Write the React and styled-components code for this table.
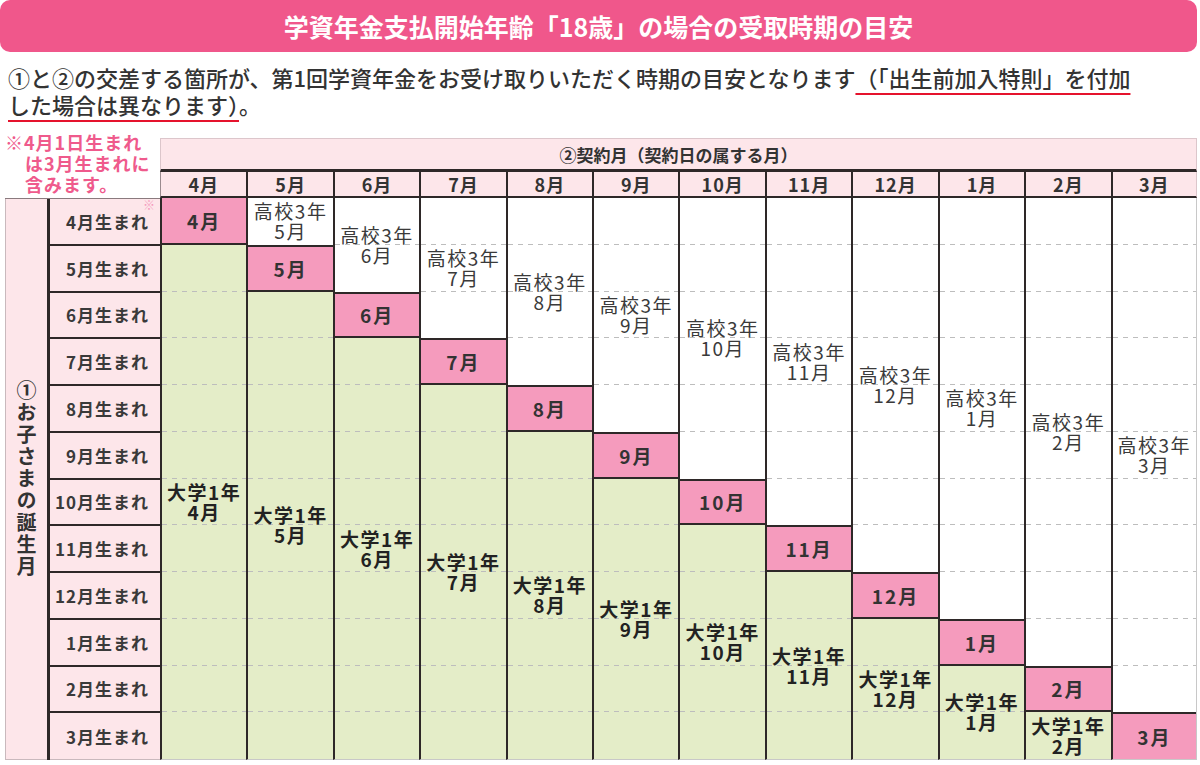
import React from 'react';
import styled, { createGlobalStyle } from 'styled-components';

const DARK = '#2e2828';
const PINK = '#f59bbd';
const GREEN = '#e4edc8';
const LIGHT = '#fde6ea';
const MONTHS = [4, 5, 6, 7, 8, 9, 10, 11, 12, 1, 2, 3];

const GlobalStyle = createGlobalStyle`
  *, *::before, *::after { box-sizing: border-box; }
  html, body { margin: 0; padding: 0; background: #fff; }
  body { font-family: "Noto Sans CJK JP", "Noto Sans", sans-serif; color: #333; }
`;

const Page = styled.div`
  width: 1200px;
  height: 765px;
  overflow: hidden;
`;

const TitleBar = styled.h1`
  margin: 0;
  width: 1197px;
  height: 52px;
  background: #f0578b;
  border-radius: 10px;
  display: flex;
  align-items: center;
  justify-content: center;
  color: #fff;
  font-size: 25px;
  font-weight: 700;
`;

const Intro = styled.p`
  margin: 12px 0 0 8px;
  font-size: 22px;
  line-height: 27px;
  font-weight: 500;
  color: #333;
`;

const Marked = styled.span`
  text-decoration: underline;
  text-decoration-color: #e5132d;
  text-decoration-thickness: 2px;
  text-underline-offset: 6px;
`;

const Table = styled.div`
  display: grid;
  grid-template-columns: 155px repeat(12, 1fr);
  grid-template-rows: 34px 26px 562px;
  width: 1192px;
  margin: 20px 0 0 5px;
`;

const Note = styled.div`
  grid-column: 1;
  grid-row: 1 / 3;
  margin-top: -6px;
  padding-left: 20px;
  text-indent: -20px;
  color: #ef5a8c;
  font-size: 18px;
  font-weight: 700;
  line-height: 21px;
  letter-spacing: 1px;
`;

const HeadTitle = styled.div`
  grid-column: 2 / 14;
  grid-row: 1;
  background: ${LIGHT};
  border: 1px solid #dcc6cb;
  border-bottom: 3px solid ${DARK};
  display: flex;
  align-items: center;
  justify-content: center;
  font-size: 17px;
  font-weight: 700;
  color: #333;
`;

const MonthHead = styled.div`
  grid-row: 2;
  background: ${LIGHT};
  border-left: ${(p) => (p.$first ? '1px solid #9a8a8e' : `2px solid ${DARK}`)};
  border-right: ${(p) => (p.$last ? '1px solid #dcc6cb' : 'none')};
  border-bottom: 2px solid ${DARK};
  display: flex;
  align-items: center;
  justify-content: center;
  font-size: 18px;
  letter-spacing: 1px;
  font-weight: 700;
  color: #333;
`;

const LabelBlock = styled.div`
  grid-column: 1;
  grid-row: 3;
  display: flex;
  border-top: 1px solid #8a7a7e;
`;

const SideLabel = styled.div`
  width: 42px;
  background: ${LIGHT};
  border-left: 1px solid #c9b9bd;
  border-bottom: 1px solid #c9b9bd;
  display: flex;
  align-items: center;
  justify-content: center;
`;

const VerticalText = styled.span`
  writing-mode: vertical-rl;
  text-orientation: upright;
  font-size: 20px;
  font-weight: 700;
  letter-spacing: 2px;
  color: #333;
`;

const RowLabels = styled.div`
  flex: 1;
  display: grid;
  grid-template-rows: repeat(12, 1fr);
  border-left: 3px solid ${DARK};
`;

const RowLabel = styled.div`
  position: relative;
  background: ${LIGHT};
  border-bottom: ${(p) => (p.$last ? '1px solid #c9b9bd' : `2px solid ${DARK}`)};
  display: flex;
  align-items: center;
  justify-content: flex-end;
  padding-right: 11px;
  font-size: 17px;
  letter-spacing: 1px;
  font-weight: 700;
  color: #3a3a3a;
`;

const Asterisk = styled.span`
  position: absolute;
  top: 0px;
  right: 4px;
  font-size: 12px;
  line-height: 12px;
  color: #f59bbd;
`;

const Column = styled.div`
  grid-row: 3;
  display: grid;
  grid-template-rows: repeat(12, 1fr);
  border-left: 2px solid ${DARK};
  border-right: ${(p) => (p.$last ? '1px solid #c8c8c8' : 'none')};
  border-bottom: 1px solid #c8c8c8;
`;

const Block = styled.div`
  position: relative;
  display: grid;
  background: ${(p) => (p.$green ? GREEN : '#fff')};
`;

const Slot = styled.div`
  background: ${(p) =>
    p.$line
      ? 'linear-gradient(to right, #bdbdbd 55%, transparent 55%) left bottom / 10px 1px repeat-x'
      : 'none'};
`;

const BlockText = styled.div`
  position: absolute;
  inset: 0;
  display: flex;
  align-items: center;
  justify-content: center;
  text-align: center;
  font-size: 19px;
  line-height: 20px;
  letter-spacing: 1.5px;
  white-space: nowrap;
  font-weight: ${(p) => (p.$bold ? 700 : 400)};
  color: ${(p) => (p.$bold ? '#222' : '#3a3a3a')};
`;

const Hit = styled.div`
  background: ${PINK};
  border-top: ${(p) => (p.$top ? `2px solid ${DARK}` : 'none')};
  border-bottom: ${(p) => (p.$bottom ? `2px solid ${DARK}` : 'none')};
  display: flex;
  align-items: center;
  justify-content: center;
  font-size: 19px;
  letter-spacing: 2px;
  font-weight: 700;
  color: #333;
`;

function Region({ start, count, green, lines }) {
  return (
    <Block
      $green={green}
      style={{
        gridRow: `${start} / span ${count}`,
        gridTemplateRows: `repeat(${count}, 1fr)`,
      }}
    >
      {Array.from({ length: count }).map((_, i) => (
        <Slot key={i} $line={i < count - 1} />
      ))}
      <BlockText $bold={green}>
        <span>
          {lines[0]}
          <br />
          {lines[1]}
        </span>
      </BlockText>
    </Block>
  );
}

export default function App() {
  return (
    <Page>
      <GlobalStyle />
      <TitleBar>学資年金支払開始年齢「18歳」の場合の受取時期の目安</TitleBar>
      <Intro>
        ①と②の交差する箇所が、第1回学資年金をお受け取りいただく時期の目安となります<Marked>（「出生前加入特則」を付加</Marked>
        <br />
        <Marked>した場合は異なります）</Marked>。
      </Intro>
      <Table>
        <Note>
          ※4月1日生まれ
          <br />
          は3月生まれに
          <br />
          含みます。
        </Note>
        <HeadTitle>②契約月（契約日の属する月）</HeadTitle>
        {MONTHS.map((m, j) => (
          <MonthHead key={m} $first={j === 0} $last={j === 11}>
            {m}月
          </MonthHead>
        ))}
        <LabelBlock>
          <SideLabel>
            <VerticalText>①お子さまの誕生月</VerticalText>
          </SideLabel>
          <RowLabels>
            {MONTHS.map((m, i) => (
              <RowLabel key={m} $last={i === 11}>
                {m}月生まれ
                {i === 0 && <Asterisk>※</Asterisk>}
              </RowLabel>
            ))}
          </RowLabels>
        </LabelBlock>
        {MONTHS.map((m, j) => (
          <Column key={m} $last={j === 11}>
            {j > 0 && (
              <Region start={1} count={j} lines={['高校3年', `${m}月`]} />
            )}
            <Hit $top={j > 0} $bottom={j < 11} style={{ gridRow: j + 1 }}>
              {m}月
            </Hit>
            {j < 11 && (
              <Region start={j + 2} count={11 - j} green lines={['大学1年', `${m}月`]} />
            )}
          </Column>
        ))}
      </Table>
    </Page>
  );
}
